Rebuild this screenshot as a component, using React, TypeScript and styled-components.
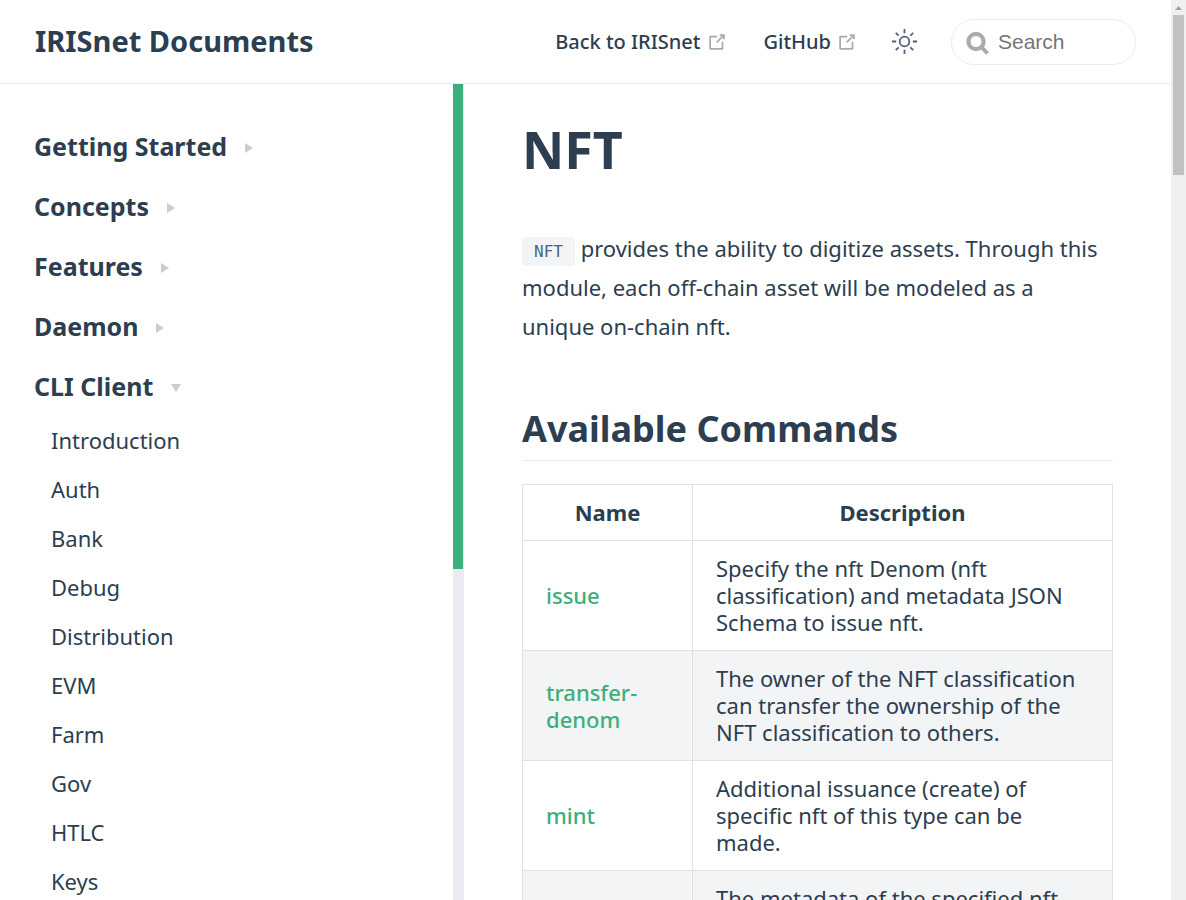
import React from "react";
import styled, { createGlobalStyle } from "styled-components";

const GlobalStyle = createGlobalStyle`
  * { box-sizing: border-box; }
  body {
    margin: 0;
    background: #fff;
    color: #2c3e50;
    font-family: "Noto Sans", "Open Sans", sans-serif;
    font-size: 22px;
  }
  a { color: inherit; text-decoration: none; }
`;

const Window = styled.div`
  display: flex;
  height: 100vh;
  overflow: hidden;
`;

const Page = styled.div`
  display: flex;
  flex: 1;
  min-width: 0;
  flex-direction: column;
`;

const ScrollTrack = styled.div`
  display: flex;
  flex: none;
  flex-direction: column;
  align-items: center;
  width: 15px;
  background: #f0f0f0;
`;

const ScrollArrow = styled.svg`
  display: block;
  width: 15px;
  height: 15px;
`;

const ScrollThumb = styled.div`
  width: 11px;
  height: 160px;
  background: #c1c1c1;
`;

const Header = styled.header`
  display: flex;
  flex: none;
  align-items: center;
  height: 84px;
  padding: 0 35px;
  border-bottom: 1px solid #eaecef;
`;

const SiteName = styled.a`
  margin-right: auto;
  padding-bottom: 2px;
  font-size: 29px;
  font-weight: 700;
  white-space: nowrap;
`;

const Nav = styled.nav`
  display: flex;
  gap: 36px;
`;

const NavLink = styled.a`
  display: flex;
  align-items: center;
  gap: 5px;
  font-size: 20px;
  font-weight: 500;
  white-space: nowrap;
`;

const ThemeButton = styled.button`
  display: flex;
  margin: 0 33px 0 34px;
  padding: 0;
  border: 0;
  background: none;
  color: #4e6178;
`;

const SearchBox = styled.label`
  display: flex;
  align-items: center;
  gap: 8px;
  width: 185px;
  height: 46px;
  padding: 0 14px;
  border: 1px solid #eaecef;
  border-radius: 23px;
`;

const SearchInput = styled.input`
  flex: 1;
  min-width: 0;
  padding: 0;
  border: 0;
  outline: 0;
  background: none;
  font-family: "Liberation Sans", Arial, sans-serif;
  font-size: 21px;
  &::placeholder { color: #757575; }
`;

const Body = styled.div`
  display: flex;
  flex: 1;
  min-height: 0;
`;

const Sidebar = styled.aside`
  display: flex;
  flex: none;
  width: 464px;
  overflow: hidden;
`;

const SidebarNav = styled.nav`
  flex: 1;
  padding: 32px 34px 0;
`;

const SidebarTrack = styled.div`
  width: 11px;
  padding-right: 1px;
  background: #e9ebf0;
`;

const SidebarThumb = styled.div`
  height: 485px;
  background: #3eaf7c;
`;

const Group = styled.button`
  display: flex;
  align-items: center;
  gap: 18px;
  height: 60px;
  padding: 0;
  border: 0;
  background: none;
  color: inherit;
  font-family: inherit;
  font-size: 25px;
  font-weight: 700;
  white-space: nowrap;
`;

const Items = styled.ul`
  margin: 0;
  padding: 0 0 0 17px;
  list-style: none;
`;

const ItemLink = styled.a`
  display: block;
  line-height: 49px;
`;

const Main = styled.main`
  flex: 1;
  min-width: 0;
  padding: 0 58px;
  overflow: hidden;
`;

const Title = styled.h1`
  margin: 31px 0 0;
  font-size: 52px;
  font-weight: 700;
  line-height: 68px;
`;

const Intro = styled.p`
  margin: 46px 0 0;
  padding-right: 4px;
  line-height: 39px;
`;

const Code = styled.code`
  padding: 5px 12px;
  border-radius: 4px;
  background: #f2f4f5;
  color: #476582;
  font-family: "DejaVu Sans Mono", monospace;
  font-size: 16px;
  line-height: 1;
`;

const Section = styled.h2`
  margin: 56px 0 0;
  padding-bottom: 4px;
  border-bottom: 1px solid #eaecef;
  font-size: 36px;
  font-weight: 700;
  line-height: 54px;
`;

const Table = styled.table`
  width: 100%;
  margin-top: 23px;
  border-collapse: collapse;
  table-layout: fixed;
  line-height: 27px;
`;

const Row = styled.tr`
  &:nth-child(even) { background: #f3f4f6; }
`;

const Head = styled.th`
  padding: 14px 23px;
  border: 1px solid #dfe2e5;
  font-weight: 700;
  &:first-child { width: 170px; }
`;

const Cell = styled.td`
  padding: 14px 23px;
  border: 1px solid #dfe2e5;
`;

const CommandLink = styled.a`
  color: #3eaf7c;
  font-weight: 500;
`;

const OutboundIcon = () => (
  <svg width="22" height="22" viewBox="0 0 100 100" fill="#aaa" aria-hidden="true">
    <path d="M18.800,85.100h56c2.200,0,4-1.800,4-4v-32h-8v28h-48v-48h28v-8h-32c-2.200,0-4,1.800-4,4v56C14.800,83.300,16.600,85.100,18.800,85.100z" />
    <polygon points="45.700,48.700 51.300,54.300 77.200,28.500 77.200,37.200 85.200,37.200 85.200,14.900 62.800,14.900 62.800,22.900 71.500,22.900" />
  </svg>
);

const SunIcon = () => (
  <svg width="26" height="26" viewBox="0 0 26 26" fill="none" stroke="currentColor" strokeWidth="1.8" aria-hidden="true">
    <circle cx="12.500" cy="12.500" r="4.800" />
    <path d="M12.500 0v4.200M12.500 20.800V25M0 12.500h4.200M20.800 12.500H25M3.800 3.800l2.800 2.800M18.400 18.400l2.800 2.800M3.800 21.200l2.800-2.800M18.400 6.600l2.800-2.800" />
  </svg>
);

const SearchIcon = () => (
  <svg width="24" height="26" viewBox="0 0 24 26" fill="none" stroke="#aaa" aria-hidden="true">
    <circle cx="10" cy="12.500" r="7.600" strokeWidth="4.200" />
    <path d="M15.500 18L21.500 24.500" strokeWidth="4" />
  </svg>
);

const Caret = ({ open }: { open?: boolean }) => (
  <svg width="10" height="14" viewBox="0 0 10 14" fill="#ccc" aria-hidden="true">
    <path d={open ? "M0 5h10L5 13z" : "M0 4v10l8-5z"} />
  </svg>
);

const groups = ["Getting Started", "Concepts", "Features", "Daemon"];
const clients = ["Introduction", "Auth", "Bank", "Debug", "Distribution", "EVM", "Farm", "Gov", "HTLC", "Keys"];
const commands = [
  ["issue", "Specify the nft Denom (nft classification) and metadata JSON Schema to issue nft."],
  ["transfer-denom", "The owner of the NFT classification can transfer the ownership of the NFT classification to others."],
  ["mint", "Additional issuance (create) of specific nft of this type can be made."],
  ["edit", "The metadata of the specified nft can be updated."],
];

export default function App() {
  return (
    <Window>
      <GlobalStyle />
      <Page>
        <Header>
          <SiteName href="#">IRISnet Documents</SiteName>
          <Nav>
            <NavLink href="#">Back to IRISnet <OutboundIcon /></NavLink>
            <NavLink href="#">GitHub <OutboundIcon /></NavLink>
          </Nav>
          <ThemeButton aria-label="Toggle theme"><SunIcon /></ThemeButton>
          <SearchBox>
            <SearchIcon />
            <SearchInput type="text" placeholder="Search" aria-label="Search" />
          </SearchBox>
        </Header>
        <Body>
          <Sidebar>
            <SidebarNav>
              {groups.map((name) => (
                <Group key={name}>{name} <Caret /></Group>
              ))}
              <Group aria-expanded="true">CLI Client <Caret open /></Group>
              <Items>
                {clients.map((name) => (
                  <li key={name}><ItemLink href="#">{name}</ItemLink></li>
                ))}
              </Items>
            </SidebarNav>
            <SidebarTrack><SidebarThumb /></SidebarTrack>
          </Sidebar>
          <Main>
            <Title>NFT</Title>
            <Intro>
              <Code>NFT</Code> provides the ability to digitize assets. Through this module, each
              off-chain asset will be modeled as a unique on-chain nft.
            </Intro>
            <Section>Available Commands</Section>
            <Table>
              <thead>
                <tr><Head>Name</Head><Head>Description</Head></tr>
              </thead>
              <tbody>
                {commands.map(([name, text]) => (
                  <Row key={name}>
                    <Cell><CommandLink href="#">{name}</CommandLink></Cell>
                    <Cell>{text}</Cell>
                  </Row>
                ))}
              </tbody>
            </Table>
          </Main>
        </Body>
      </Page>
      <ScrollTrack>
        <ScrollArrow viewBox="0 0 15 15"><path d="M4 10l3.500-4L11 10z" fill="#a3a3a3" /></ScrollArrow>
        <ScrollThumb />
      </ScrollTrack>
    </Window>
  );
}
